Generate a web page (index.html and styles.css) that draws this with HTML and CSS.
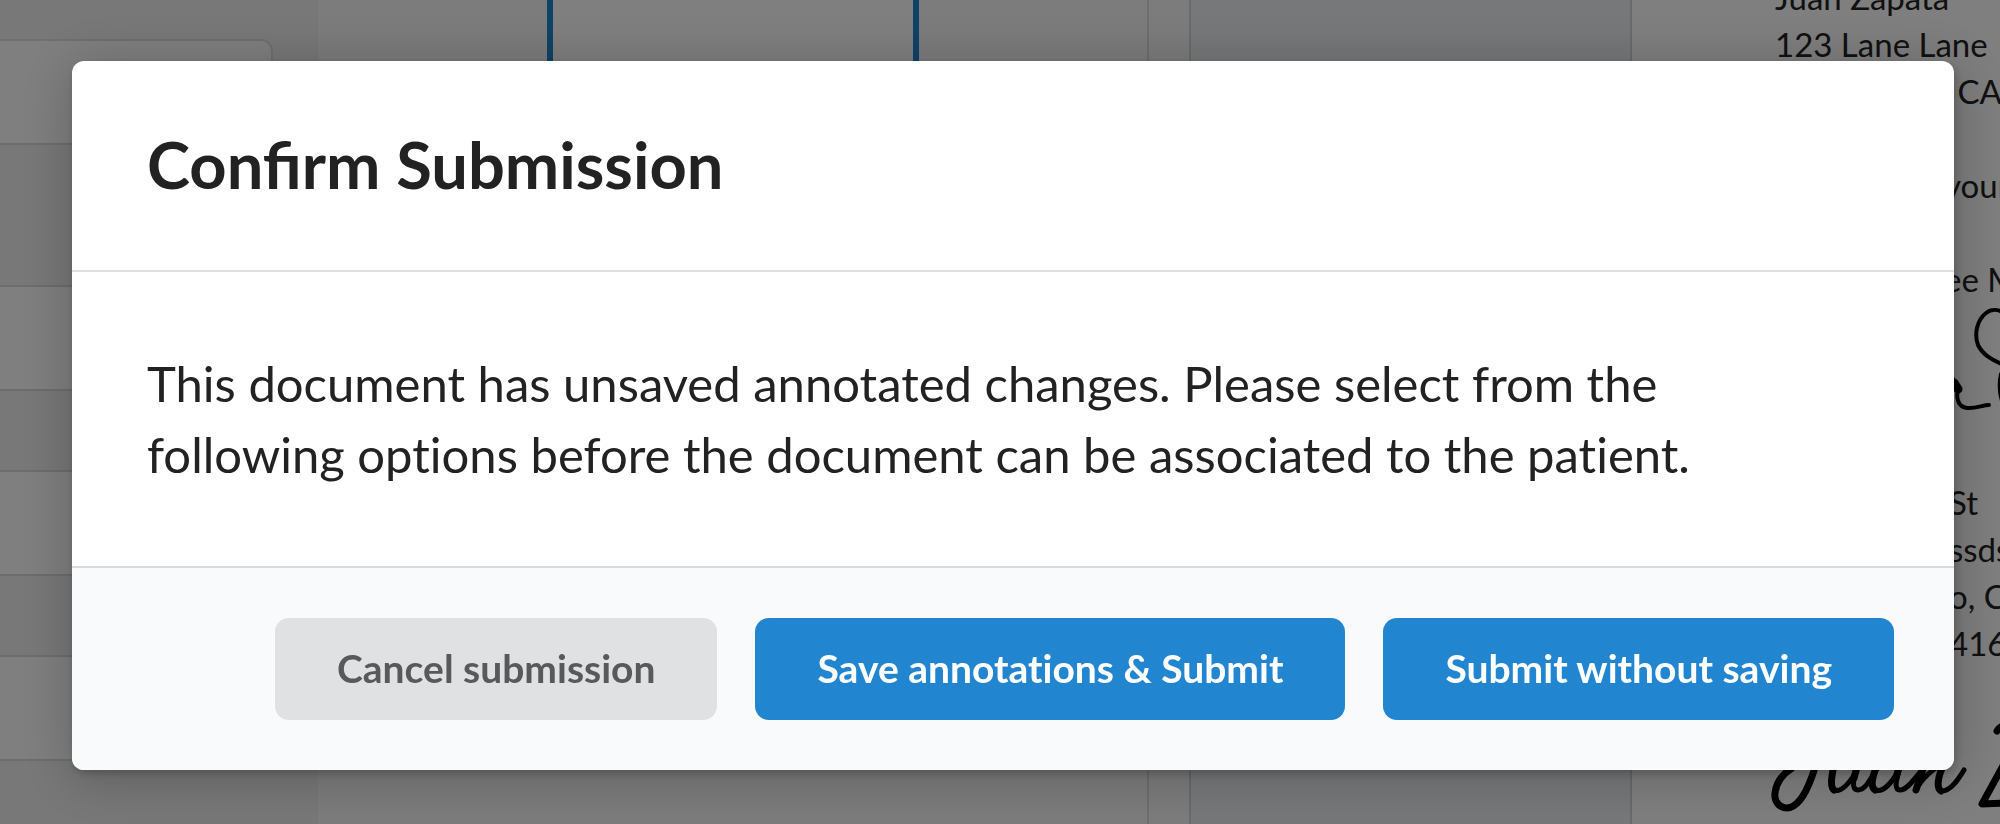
FILE: index.html
```html
<!DOCTYPE html>
<html lang="en">
<head>
<meta charset="utf-8">
<title>Confirm Submission</title>
<link rel="stylesheet" href="styles.css">
</head>
<body>
<div class="workspace" aria-hidden="true">
  <div class="sidebar">
    <div class="card">
      <div class="row row-first"></div>
      <div class="row row-shade row-tall"></div>
      <div class="row"></div>
      <div class="row row-shade"></div>
      <div class="row"></div>
      <div class="row row-shade"></div>
      <div class="row"></div>
    </div>
  </div>
  <div class="viewer"><div class="sheet"></div></div>
  <div class="gutter"></div>
  <div class="panel"></div>
  <div class="letter">
    <div>Juan Zapata</div>
    <div>123 Lane Lane</div>
    <div class="tail">&nbsp;CA</div>
    <div>&nbsp;</div>
    <div class="tail tail-wide">your</div>
    <div>&nbsp;</div>
    <div class="tail tail-wide">ee M</div>
    <svg class="signature" viewBox="1775 303 225 176" fill="none" stroke="#000" stroke-width="4" stroke-linecap="round">
      <path d="M2004 313C1998 309 1991 309 1986 313C1977 320 1974 334 1978 345C1983 355 1992 360 2004 365M2001 374C1999 383 1999 391 2002 401"/>
      <path d="M1951 376L1959 388C1955 397 1958 407 1967 408C1975 409 1983 405 1989 405"/>
      <path d="M1954 383L1958 389" stroke-width="9"/>
    </svg>
    <div class="tail">St</div>
    <div class="tail">ssds</div>
    <div class="tail">o, CA</div>
    <div class="tail">416</div>
    <svg class="signature" viewBox="1775 667 225 157" fill="none" stroke="#000" stroke-linecap="round" stroke-linejoin="round">
      <path stroke-width="7" d="M1822 745C1815 768 1809 789 1800 800C1795 806 1791 808 1787 808C1779 808 1774 801 1775 793C1776 784 1781 775 1792 768"/>
      <path stroke-width="7" d="M1836 760C1831 774 1830 787 1834 790M1859 760L1854 778M1879 762C1872 775 1870 787 1875 790M1901 760L1896 778M1924 766L1916 790M1944 764C1938 776 1936 788 1941 791"/>
      <path stroke-width="5" d="M1834 790C1842 793 1850 782 1856 772C1852 784 1853 790 1858 790C1865 790 1869 781 1875 772M1875 790C1884 793 1892 782 1899 770C1895 784 1895 790 1900 790C1908 790 1915 777 1924 768M1918 786C1925 775 1935 768 1942 764M1941 791C1950 792 1958 780 1964 770"/>
      <path stroke-width="7" d="M1997 731C2001 725 2006 724 2012 725M2004 764L1982 804L2004 803"/>
    </svg>
  </div>
</div>

<div class="dimmer">
  <section class="modal" role="dialog" aria-modal="true" aria-labelledby="modal-title">
    <header class="modal-header"><h1 id="modal-title">Confirm Submission</h1></header>
    <div class="modal-body">
      <p>This document has unsaved annotated changes. Please select from the following options before the document can be associated to the patient.</p>
    </div>
    <footer class="modal-actions">
      <button type="button" class="button">Cancel submission</button>
      <button type="button" class="button primary">Save annotations &amp; Submit</button>
      <button type="button" class="button primary">Submit without saving</button>
    </footer>
  </section>
</div>
</body>
</html>
```
FILE: styles.css
```css
* { box-sizing: border-box; }

html, body { height: 100%; }

body {
  margin: 0;
  overflow: hidden;
  font-family: Lato, "Liberation Sans", sans-serif;
  color: #222;
}

.workspace {
  display: grid;
  grid-template-columns: 318px 1fr 42px 443px 368px;
  height: 100%;
  overflow: hidden;
  background: #fff;
}

.sidebar {
  padding: 39px 45px 0 0;
  background: #f0f0f0;
  overflow: hidden;
}

.card {
  border: solid #dedede;
  border-width: 2px 2px 0 0;
  border-radius: 0 12px 0 0;
  background: #fff;
  overflow: hidden;
}

.row { height: 104px; border-bottom: 2px solid #dadada; }
.row-shade { height: 81px; background: #f0f0f0; }
.row-tall { height: 142px; }

.viewer {
  display: flex;
  justify-content: center;
  align-items: flex-start;
  background: #f8f8f8;
}

.sheet {
  width: 372px;
  height: 80%;
  background: #fff;
  border: solid #2185d0;
  border-width: 0 6px;
}

.gutter { background: #f8f8f8; border-left: 2px solid #dcdcdc; }

.panel {
  background: #eff1f5;
  border: solid #d4d6d8;
  border-width: 0 2px;
}

.letter {
  margin-top: -26px;
  padding-left: 143px;
  overflow: hidden;
  font-size: 33px;
  line-height: 47px;
  white-space: nowrap;
}

.tail { padding-left: 174px; }
.tail-wide { padding-left: 169px; }

.signature { display: block; width: 100%; overflow: visible; }

.dimmer {
  position: fixed;
  inset: 0;
  display: flex;
  align-items: flex-start;
  padding: 61px 46px 54px 72px;
  background: rgba(0, 0, 0, 0.5);
}

.modal {
  flex: 1;
  overflow: hidden;
  border-radius: 12px;
  background: #fff;
  box-shadow: 2px 4px 8px 0 rgba(0, 0, 0, 0.2), 2px 6px 52px 6px rgba(0, 0, 0, 0.2);
}

.modal-header {
  padding: 63px 75px 66px;
  border-bottom: 2px solid #dedfdf;
}

.modal-header h1 {
  margin: 0;
  font-size: 65px;
  line-height: 80px;
  font-weight: 700;
}

.modal-body { padding: 76px 75px; }

.modal-body p {
  max-width: 1640px;
  margin: 0;
  font-size: 49px;
  line-height: 71px;
  font-variant-ligatures: none;
}

.modal-actions {
  display: flex;
  flex-wrap: wrap;
  justify-content: flex-end;
  gap: 38px;
  padding: 50px 60px;
  border-top: 2px solid #d8dadc;
  background: #f9fafb;
}

.button {
  padding: 25px 62px 27px;
  border: 0;
  border-radius: 14px;
  background: #e0e1e2;
  color: #595959;
  font: 700 39px/50px Lato, "Liberation Sans", sans-serif;
  font-variant-ligatures: none;
  cursor: pointer;
}

.primary { background: #2185d0; color: #fff; }
```
